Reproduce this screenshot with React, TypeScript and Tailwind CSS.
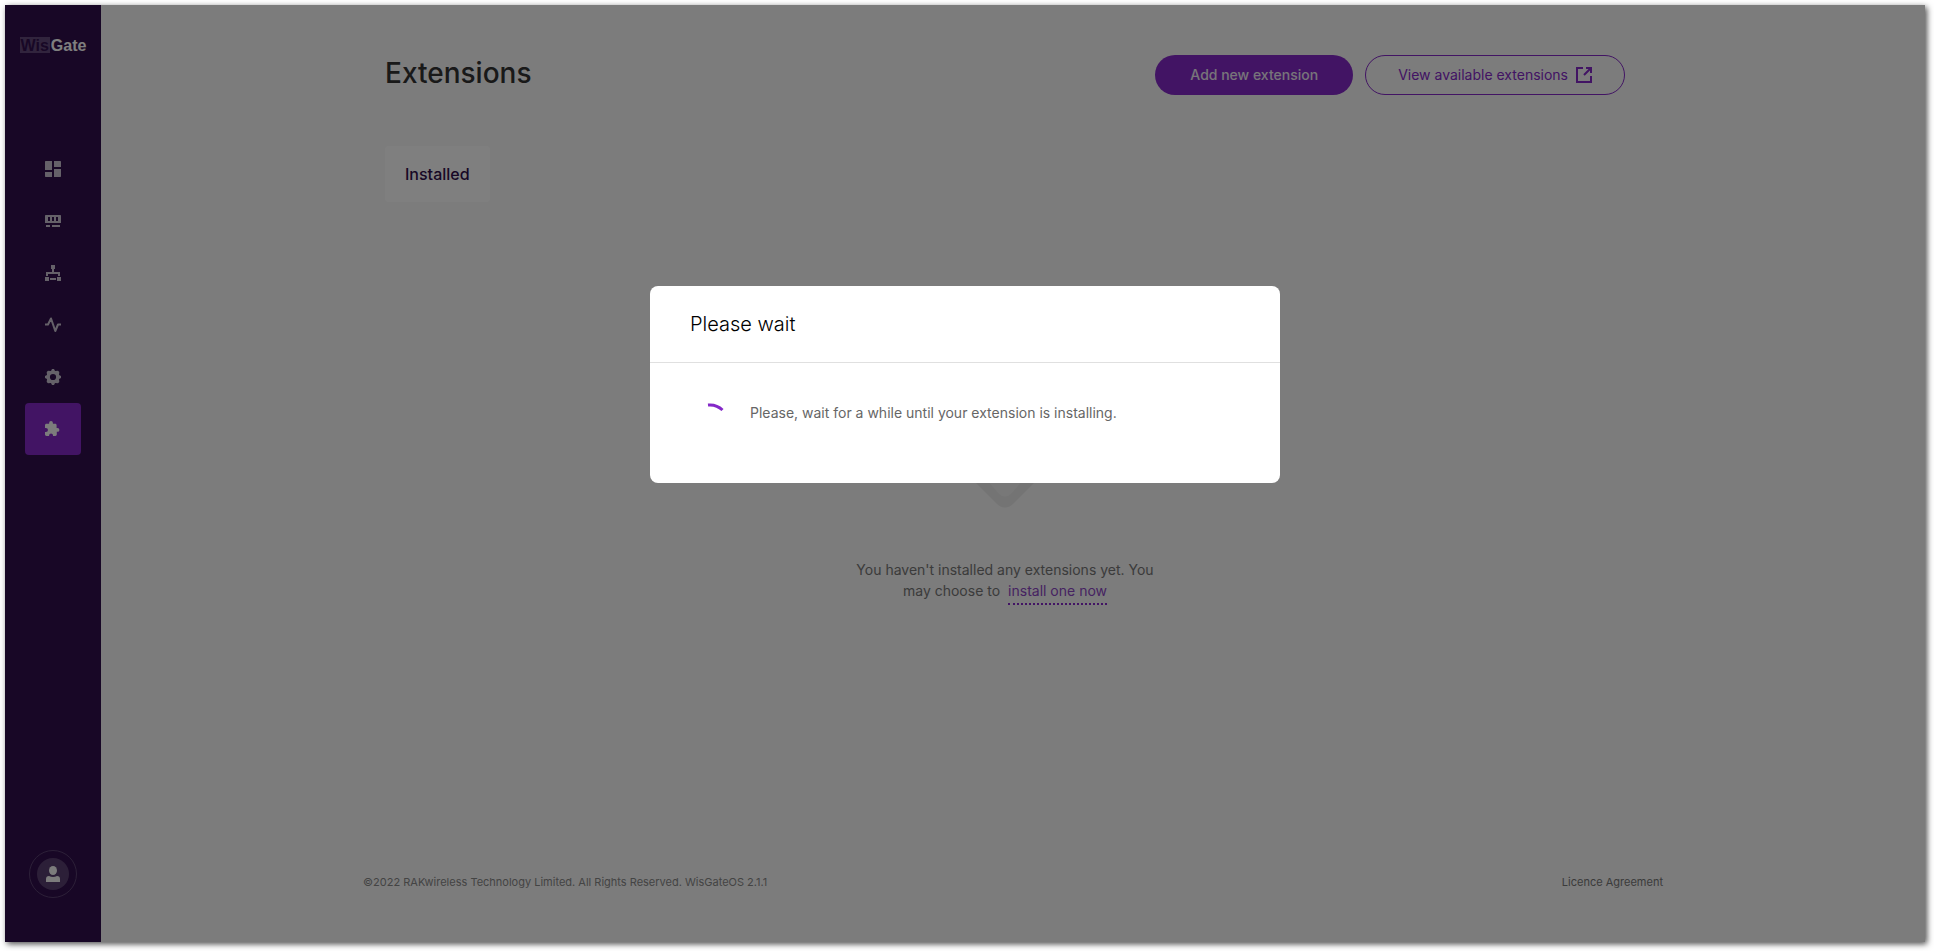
import type { ReactNode } from "react";

type NavItem = { label: string; icon: ReactNode; active?: boolean };

const navItems: NavItem[] = [
  {
    label: "Dashboard",
    icon: (
      <path d="M0 0.7Q0 0 .7 0H7V9H0zM9 0h6.300Q16 0 16 .7V6H9zM0 11h7v5H.7Q0 16 0 15.300zM9 8h7v7.300q0 .7-.7 .7H9z" />
    ),
  },
  {
    label: "Gateway",
    icon: (
      <path
        fillRule="evenodd"
        d="M.7 2H15.300Q16 2 16 2.700V10H0V2.700Q0 2 .7 2zM3 4v4h2V4zM7 4v4h2V4zM11 4v4h2V4zM1 12h4v2H1zM7 12h8v2H7z"
      />
    ),
  },
  {
    label: "Network",
    icon: <path d="M6 0h4v4H9v3h6v4h-2V9H3v2H1V7h6V4H6zM0 12h4v4H0zM5 13h6v2H5zM12 12h4v4h-4z" />,
  },
  {
    label: "Diagnostics",
    icon: (
      <path
        d="M0 7.500H3L6 1.500L10.300 14L13 7.500H16"
        fill="none"
        stroke="currentColor"
        strokeWidth="2"
        strokeLinejoin="round"
      />
    ),
  },
  {
    label: "Settings",
    icon: (
      <path
        fillRule="evenodd"
        d="M7 0H9L10 2L13 1.700L14.300 3L14 6L16 7V9L14 10L14.300 13L13 14.300L10 14L9 16H7L6 14L3 14.300L1.700 13L2 10L0 9V7L2 6L1.700 3L3 1.700L6 2zM8 4.900A3.100 3.100 0 1 0 8 11.100A3.100 3.100 0 1 0 8 4.900z"
      />
    ),
  },
  {
    label: "Extensions",
    active: true,
    icon: (
      <path d="M12.500 7h-.9V4.200C11.600 3.400 11 2.800 10.200 2.800H7.900V2A1.900 1.900 0 0 0 4.100 2V2.800H1.500C.7 2.800 0 3.400 0 4.200V6.900H.9A2.050 2.050 0 0 1 .9 11H0V13.600C0 14.400 .7 15 1.500 15H4.100V14.100A2 2 0 0 1 8 14.100V15H10.400C11.200 15 11.800 14.400 11.800 13.600V10.800H12.500A1.900 1.900 0 0 0 12.500 7z" />
    ),
  },
];

function Sidebar() {
  return (
    <aside className="flex w-24 shrink-0 flex-col items-center bg-[#300f4c] pt-8 pb-11">
      <a href="#home" className="flex h-4 items-start gap-px font-['Liberation_Sans',sans-serif] text-base leading-4 font-bold">
        <span className="h-4 bg-[#63487a] px-px pt-px text-[#300f4c]">Wis</span>
        <span className="pt-px text-white">Gate</span>
      </a>
      <nav className="mt-[90px] flex flex-col">
        {navItems.map((item) => (
          <a
            key={item.label}
            href={"#" + item.label.toLowerCase()}
            aria-label={item.label}
            className={
              item.active
                ? "flex h-[52px] w-14 items-center justify-center rounded bg-[#8428c8] text-[#f8f8f8]"
                : "flex h-[52px] w-14 items-center justify-center text-[#cbc3d2]"
            }
          >
            <svg viewBox="0 0 16 16" className="size-4" fill="currentColor" aria-hidden="true">
              {item.icon}
            </svg>
          </a>
        ))}
      </nav>
      <button
        type="button"
        aria-label="Account"
        className="mt-auto flex size-12 items-center justify-center rounded-full border border-[#593f70]"
      >
        <span className="flex size-8 items-center justify-center rounded-full bg-[#593f70] text-[#f8f8f8]">
          <svg viewBox="0 0 14 16" className="h-4 w-3.5" fill="currentColor" aria-hidden="true">
            <ellipse cx="7" cy="4.500" rx="4" ry="4.500" />
            <path d="M0 16V13Q0 10 3 10Q7 12 11 10Q14 10 14 13V16z" />
          </svg>
        </span>
      </button>
    </aside>
  );
}

function Main() {
  return (
    <div className="flex min-w-0 flex-1 flex-col bg-[#f8f8f8]">
      <main className="flex flex-1 flex-col pr-4">
        <div className="mx-auto flex w-full max-w-[1240px] flex-1 flex-col">
          <header className="flex items-start justify-between pt-[50px]">
            <h1 className="text-[28px] leading-9 font-medium text-[#333333]">Extensions</h1>
            <div className="flex gap-3">
              <button
                type="button"
                className="h-10 rounded-full bg-[#8428c8] px-[35px] text-sm font-medium text-[#f0eaf5]"
              >
                Add new extension
              </button>
              <a
                href="#available"
                className="flex h-10 items-center gap-2 rounded-full border border-[#8428c8] px-8 text-sm text-[#8428c8]"
              >
                View available extensions
                <svg viewBox="0 0 16 16" className="size-4" fill="none" stroke="currentColor" strokeWidth="2" aria-hidden="true">
                  <path d="M7 1H1V15H15V9M10 1H15V6M15 1L8 8" />
                </svg>
              </a>
            </div>
          </header>
          <div className="mt-[51px] flex" role="tablist">
            <button
              type="button"
              role="tab"
              aria-selected="true"
              className="h-14 rounded bg-white px-5 text-base font-medium text-[#300f4c]"
            >
              Installed
            </button>
          </div>
          <section className="mt-[186px] flex flex-col items-center">
            <svg viewBox="0 0 120 120" className="size-[120px]" aria-hidden="true">
              <path d="M4 56Q-2 62 4 68L51 115Q60 124 69 115L116 68Q122 62 116 56L66 5Q60 -1 54 5z" fill="#e8e8e8" />
              <path d="M16 62L54 106Q60 111 66 106L104 62L60 18z" fill="#f0f0f0" />
            </svg>
            <div className="mt-[51px] flex flex-col items-center text-sm leading-[21px] text-[#777777]">
              <p>You haven't installed any extensions yet. You</p>
              <div className="flex gap-2">
                <span>may choose to</span>
                <a href="#install" className="border-b-2 border-dotted border-[#8428c8] pb-0.5 text-[#8c46c4]">
                  install one now
                </a>
              </div>
            </div>
          </section>
        </div>
      </main>
      <footer className="mx-auto flex w-full max-w-[1300px] items-center justify-between pb-[52px] text-[11px] leading-4 text-[#888888]">
        <span>©2022 RAKwireless Technology Limited. All Rights Reserved. WisGateOS 2.1.1</span>
        <a href="#licence" className="text-[#777777]">
          Licence Agreement
        </a>
      </footer>
    </div>
  );
}

function WaitDialog() {
  return (
    <div className="absolute inset-0 flex items-start justify-center bg-black/50 pt-[281px]">
      <div role="dialog" aria-modal="true" aria-labelledby="wait-title" className="w-full max-w-[630px] rounded-lg bg-white">
        <h2 id="wait-title" className="border-b border-[#e0e0e0] px-10 py-6 text-xl leading-7 font-light text-black">
          Please wait
        </h2>
        <div className="flex items-start gap-5 p-10">
          <svg viewBox="0 0 40 40" className="size-10" fill="none" aria-hidden="true">
            <path d="M18 2A18 18 0 0 1 32.500 7" stroke="#8428c8" strokeWidth="3" />
          </svg>
          <p className="text-sm leading-5 text-[#666666]">
            Please, wait for a while until your extension is installing.
          </p>
        </div>
      </div>
    </div>
  );
}

export default function App() {
  return (
    <div className="flex min-h-screen bg-white pt-[5px] pr-[9px] pb-[9px] pl-[5px] font-['Inter',sans-serif]">
      <div className="relative flex flex-1 shadow-[2px_2px_6px_rgba(0,0,0,0.7)]">
        <Sidebar />
        <Main />
        <WaitDialog />
      </div>
    </div>
  );
}
